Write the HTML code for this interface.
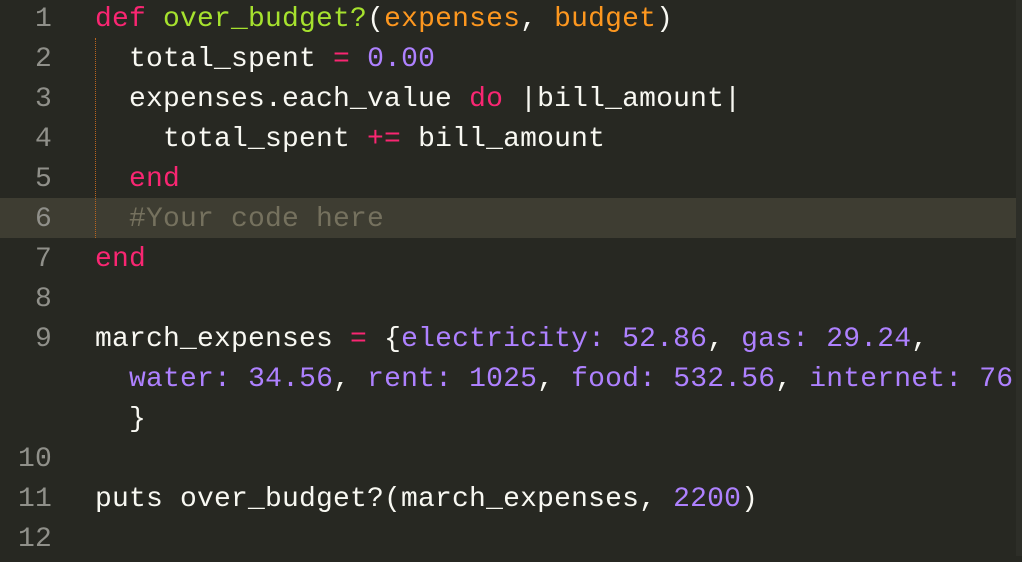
<!DOCTYPE html>
<html><head><style>
body{margin:0;width:1022px;height:556px;background:#272822;overflow:hidden;position:relative;font-family:"Liberation Mono",monospace;font-size:28px;letter-spacing:0.2px;color:#f8f8f2}
.l{position:absolute;left:0;width:1016px;height:40px;line-height:44px;white-space:pre}
.n{position:absolute;right:calc(1016px - 52px);width:52px;text-align:right;color:#90908a}
.c{position:absolute;left:95px}
.k{color:#f92672}.f{color:#a6e22e}.p{color:#fd971f}.m{color:#ae81ff}.cm{color:#75715e}
.hl{background:#3e3d32}
.g{position:absolute;left:95px;top:38px;height:200px;border-left:1px dotted #b8651f}
.mini{position:absolute;left:1016px;top:0;width:6px;height:556px;background:#2d2e28}
</style></head><body>
<div class="l" style="top:-2px"><span class="n">1</span><span class="c"><span class="k">def</span> <span class="f">over_budget?</span>(<span class="p">expenses</span>, <span class="p">budget</span>)</span></div>
<div class="l" style="top:38px"><span class="n">2</span><span class="c">  total_spent <span class="k">=</span> <span class="m">0.00</span></span></div>
<div class="l" style="top:78px"><span class="n">3</span><span class="c">  expenses.each_value <span class="k">do</span> |bill_amount|</span></div>
<div class="l" style="top:118px"><span class="n">4</span><span class="c">    total_spent <span class="k">+=</span> bill_amount</span></div>
<div class="l" style="top:158px"><span class="n">5</span><span class="c">  <span class="k">end</span></span></div>
<div class="l hl" style="top:198px"><span class="n">6</span><span class="c">  <span class="cm">#Your code here</span></span></div>
<div class="l" style="top:238px"><span class="n">7</span><span class="c"><span class="k">end</span></span></div>
<div class="l" style="top:278px"><span class="n">8</span></div>
<div class="l" style="top:318px"><span class="n">9</span><span class="c">march_expenses <span class="k">=</span> {<span class="m">electricity:</span> <span class="m">52.86</span>, <span class="m">gas:</span> <span class="m">29.24</span>,</span></div>
<div class="l" style="top:358px"><span class="c">  <span class="m">water:</span> <span class="m">34.56</span>, <span class="m">rent:</span> <span class="m">1025</span>, <span class="m">food:</span> <span class="m">532.56</span>, <span class="m">internet:</span> <span class="m">76</span></span></div>
<div class="l" style="top:398px"><span class="c">  }</span></div>
<div class="l" style="top:438px"><span class="n">10</span></div>
<div class="l" style="top:478px"><span class="n">11</span><span class="c">puts over_budget?(march_expenses, <span class="m">2200</span>)</span></div>
<div class="l" style="top:518px"><span class="n">12</span></div>
<div class="g"></div>
<div class="mini"></div>
</body></html>
